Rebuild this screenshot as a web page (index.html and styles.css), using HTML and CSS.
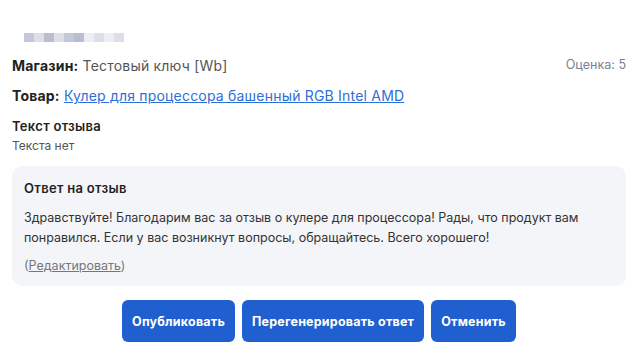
FILE: index.html
```html
<!DOCTYPE html>
<html lang="ru">
<head>
  <meta charset="UTF-8" />
  <title>Ответ на отзыв</title>
  <link rel="stylesheet" href="styles.css">
</head>
<body>
  <div class="review">
    <div class="blurred">
      <span class="px p1"></span><span class="px p2"></span><span class="px p3"></span>
      <span class="px p2"></span><span class="px p1"></span><span class="px p3"></span>
      <span class="px p4"></span><span class="px p2"></span><span class="px p4"></span>
      <span class="px p2"></span>
    </div>

    <div class="row head">
      <div><b>Магазин:</b> Тестовый ключ [Wb]</div>
      <div class="score">Оценка: 5</div>
    </div>

    <div class="row">
      <div><b>Товар:</b> <a href="#">Кулер для процессора башенный RGB Intel AMD</a></div>
    </div>

    <h4>Текст отзыва</h4>
    <p class="muted">Текста нет</p>

    <div class="answer">
      <h4>Ответ на отзыв</h4>
      <p>Здравствуйте! Благодарим вас за отзыв о кулере для процессора! Рады, что продукт вам понравился. Если у вас возникнут вопросы, обращайтесь. Всего хорошего!</p>
      <a href="#" class="edit">(<u>Редактировать</u>)</a>
    </div>

    <div class="actions">
      <button>Опубликовать</button>
      <button>Перегенерировать ответ</button>
      <button>Отменить</button>
    </div>
  </div>
</body>
</html>
```

FILE: styles.css
```css
body {
  margin: 0;
  font-family: Inter, "Open Sans", sans-serif;
  color: #222;
  background: #fff;
}
.review {
  padding: 33px 9px 0 12px;
}
.blurred {
  display: flex;
  margin-left: 12px;
  height: 9px;
}
.px {
  width: 10px;
  height: 9px;
}
.p1 { background: #c4c7d8; }
.p2 { background: #dcdee8; }
.p3 { background: #b9bdd2; }
.p4 { background: #eceef3; }
.row {
  display: flex;
  justify-content: space-between;
  align-items: baseline;
  font-size: 14px;
  letter-spacing: 0.2px;
  line-height: 18px;
  color: #555;
}
.row b {
  color: #222;
}
.head {
  margin-top: 15px;
}
.row + .row {
  margin-top: 12px;
}
.score {
  font-size: 12.5px;
  letter-spacing: 0;
  color: #7a7f9a;
  align-self: flex-start;
  margin-top: -1px;
}
a {
  color: #2d6fd6;
}
h4 {
  margin: 13px 0 0;
  font-size: 13px;
  font-weight: 600;
  letter-spacing: 0.3px;
  line-height: 16px;
}
.muted {
  margin: 4px 0 0;
  font-size: 12px;
  line-height: 16px;
  color: #555;
}
.answer {
  margin-top: 12px;
  background: #f4f5f9;
  border-radius: 10px;
  padding: 14px 12px 12px 12px;
}
.answer h4 {
  margin: 0;
}
.answer p {
  margin: 12px 0 0;
  font-size: 12.5px;
  line-height: 20px;
  color: #333;
}
.edit {
  display: inline-block;
  margin-top: 10px;
  font-size: 12.5px;
  line-height: 16px;
  color: #777;
  text-decoration: none;
}
.actions {
  display: flex;
  justify-content: center;
  gap: 7px;
  margin-top: 14px;
}
.actions button {
  background: #1f5fd0;
  color: #fff;
  border: none;
  border-radius: 6px;
  font-family: inherit;
  font-size: 12.5px;
  font-weight: 700;
  letter-spacing: 0.2px;
  height: 42px;
  padding: 0 10px;
}
```
